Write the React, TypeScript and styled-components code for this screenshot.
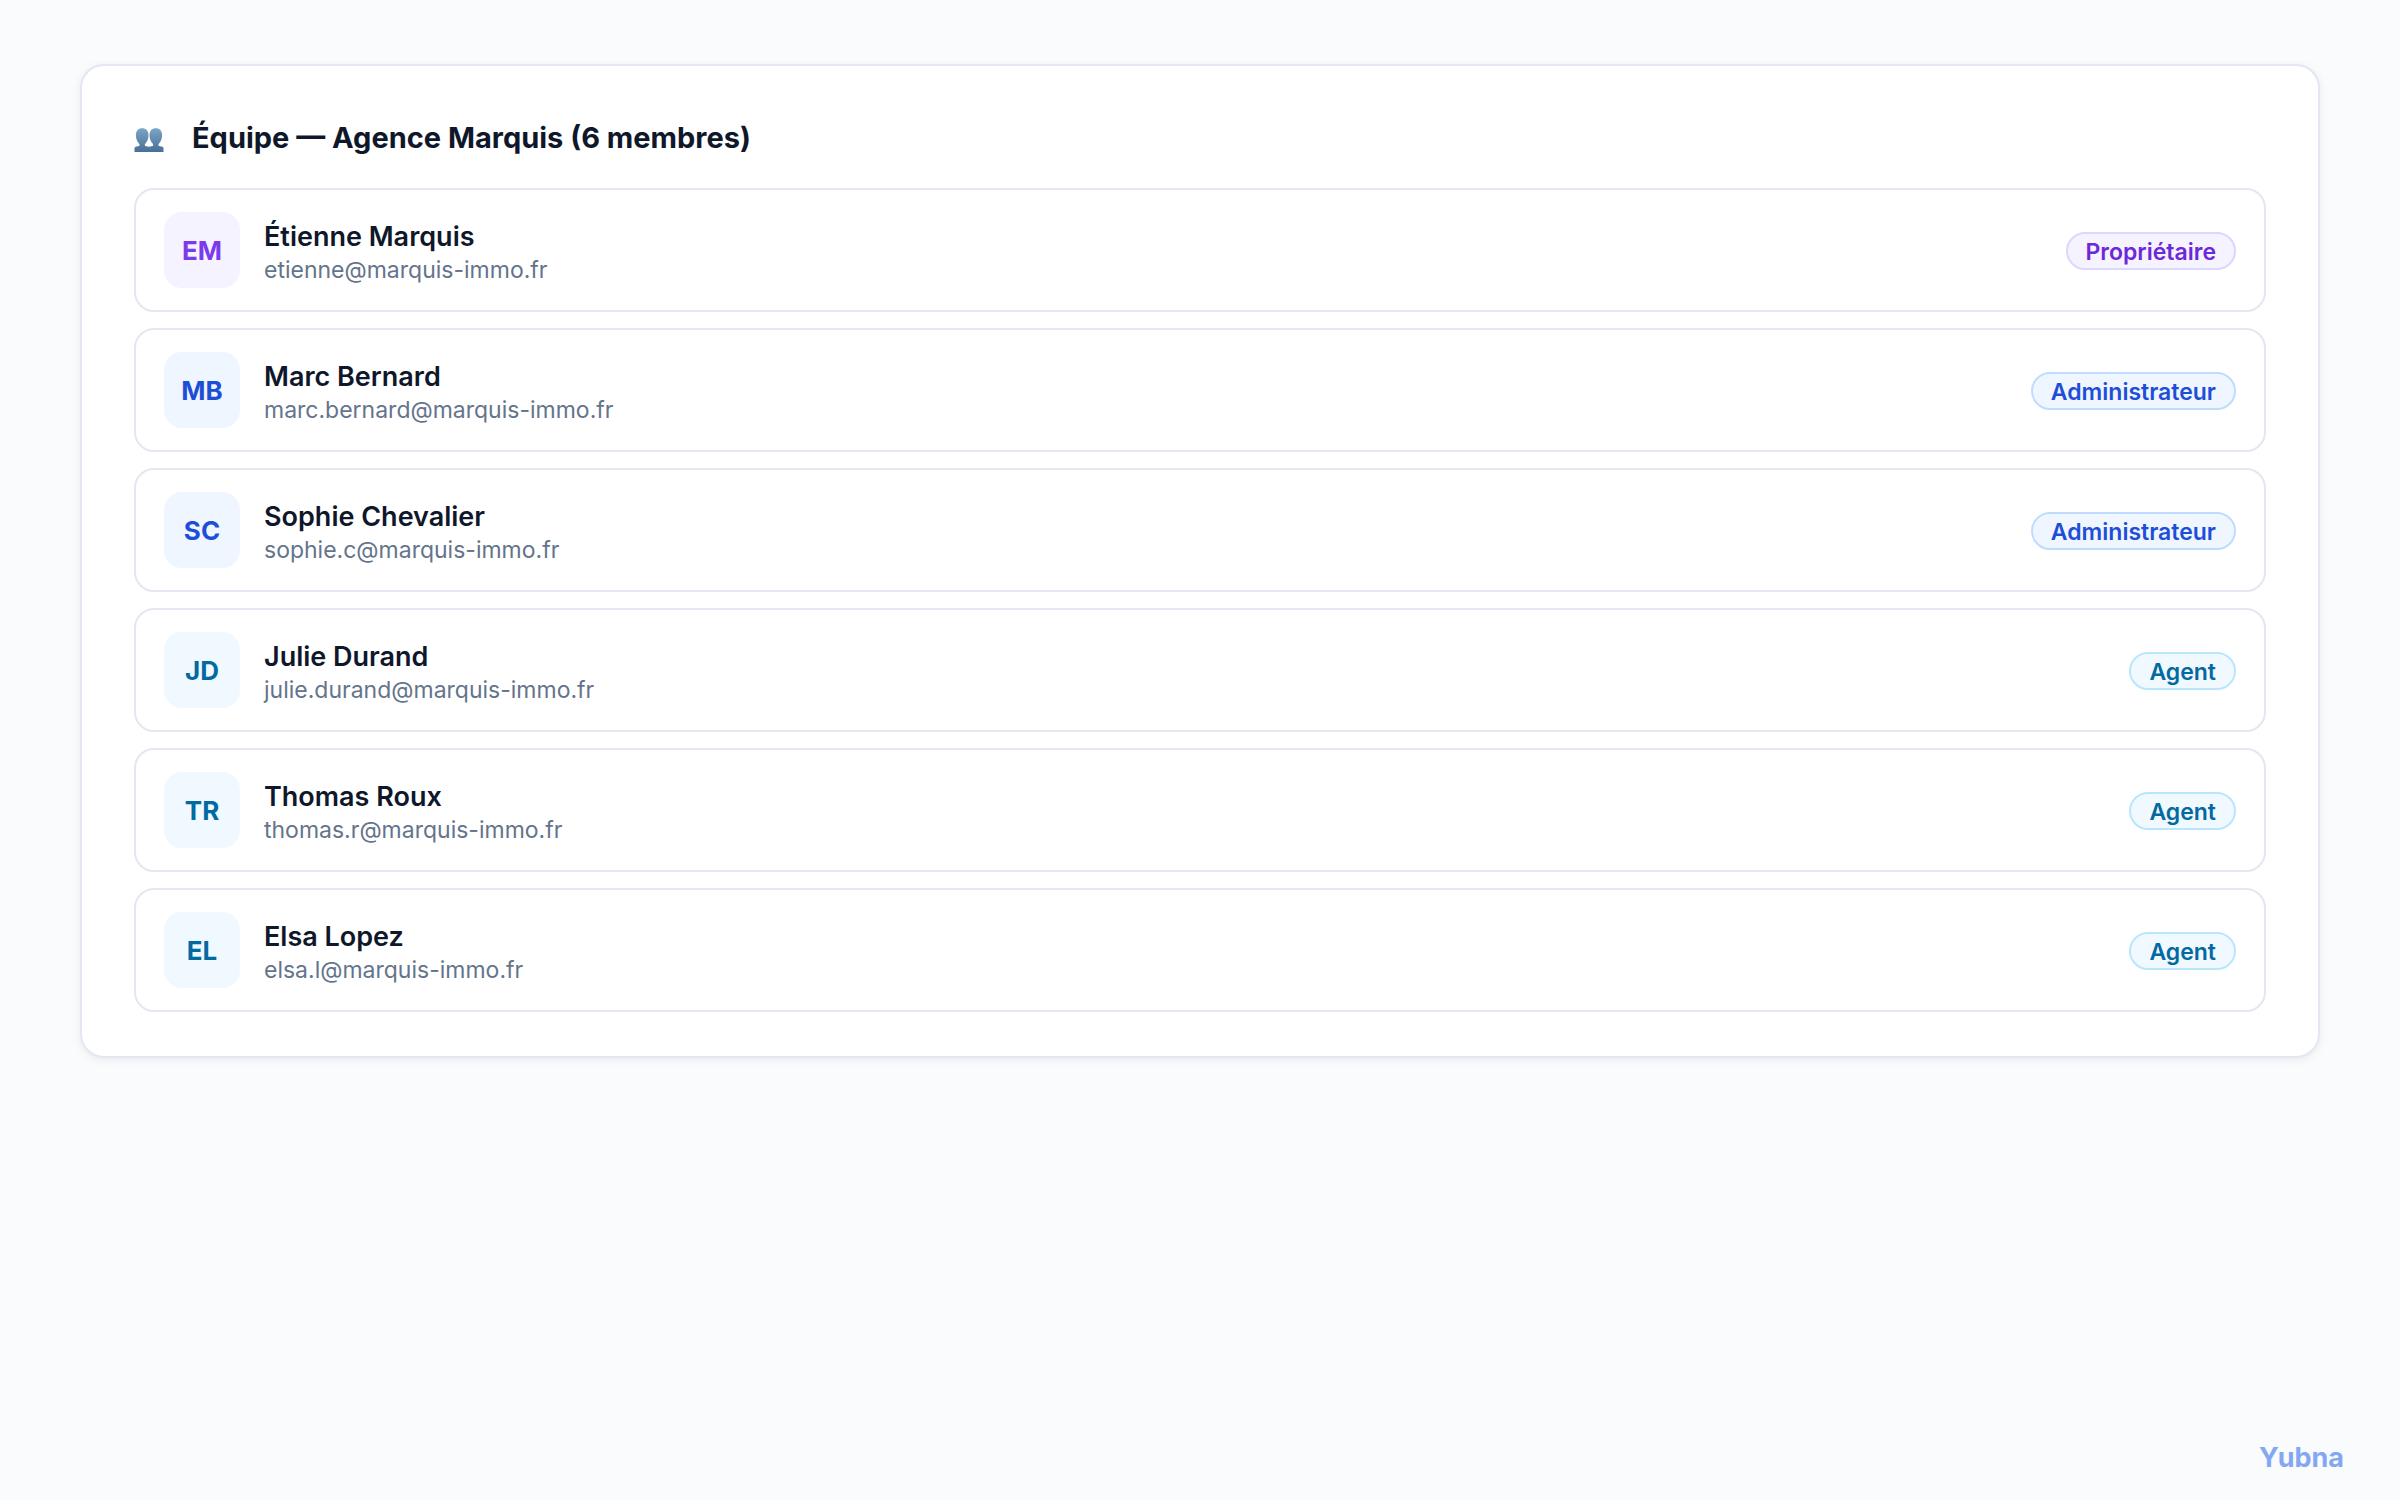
import React from "react";
import styled, { createGlobalStyle } from "styled-components";

const GlobalStyle = createGlobalStyle`
  * { box-sizing: border-box; }
  body {
    margin: 0;
    background: #f9fbfd;
    color: #0f172a;
    font-family: Inter, "Liberation Sans", sans-serif;
    -webkit-font-smoothing: antialiased;
  }
`;

const Page = styled.div`
  display: flex;
  flex-direction: column;
  min-height: 100vh;
  padding: 64px 80px 24px;
`;

const Card = styled.main`
  padding: 44px 52px;
  background: #ffffff;
  border: 2px solid #e4e7f0;
  border-radius: 24px;
  box-shadow: 0 2px 8px rgba(15, 23, 42, 0.07);
`;

const CardHeader = styled.header`
  display: flex;
  align-items: center;
  gap: 28px;
  height: 54px;
  margin-bottom: 24px;
  padding-top: 2px;
`;

const TeamIcon = styled.svg`
  flex: none;
  width: 30px;
  height: 24px;
  margin-top: 4px;
`;

const Title = styled.h1`
  margin: 0;
  font-size: 29px;
  line-height: 36px;
  font-weight: 700;
`;

const MemberList = styled.ul`
  display: flex;
  flex-direction: column;
  gap: 16px;
  margin: 0;
  padding: 0;
  list-style: none;
`;

const MemberRow = styled.li`
  display: flex;
  align-items: center;
  gap: 24px;
  padding: 22px 28px;
  border: 2px solid #e4e7f0;
  border-radius: 20px;
`;

type Tone = "violet" | "blue" | "sky";

const tones = {
  violet: { avatar: "#7c3aed", text: "#6d28d9", background: "#f5f3ff", border: "#ddd6fe" },
  blue: { avatar: "#1d4ed8", text: "#1d4ed8", background: "#eff6ff", border: "#bfdbfe" },
  sky: { avatar: "#0369a1", text: "#0369a1", background: "#f0f9ff", border: "#bae6fd" },
};

const Avatar = styled.div<{ $tone: Tone }>`
  display: grid;
  place-items: center;
  flex: none;
  width: 76px;
  height: 76px;
  border-radius: 18px;
  background: ${(p) => tones[p.$tone].background};
  color: ${(p) => tones[p.$tone].avatar};
  font-size: 26px;
  font-weight: 700;
`;

const Identity = styled.div`
  flex: 1;
  min-width: 0;
  padding-top: 6px;
`;

const Name = styled.div`
  font-size: 27px;
  line-height: 34px;
  font-weight: 600;
`;

const Email = styled.div`
  color: #64748b;
  font-size: 23px;
  line-height: 32px;
`;

const Role = styled.span<{ $tone: Tone }>`
  flex: none;
  margin-top: 2px;
  padding: 3px 18px 1px;
  border: 2px solid ${(p) => tones[p.$tone].border};
  border-radius: 20px;
  background: ${(p) => tones[p.$tone].background};
  color: ${(p) => tones[p.$tone].text};
  font-size: 23px;
  line-height: 30px;
  font-weight: 600;
`;

const Brand = styled.footer`
  align-self: flex-end;
  margin-top: auto;
  margin-right: -24px;
  color: #2563eb;
  opacity: 0.55;
  font-size: 27px;
  line-height: 36px;
  font-weight: 700;
`;

const members: { initials: string; name: string; email: string; role: string; tone: Tone }[] = [
  { initials: "EM", name: "Étienne Marquis", email: "etienne@marquis-immo.fr", role: "Propriétaire", tone: "violet" },
  { initials: "MB", name: "Marc Bernard", email: "marc.bernard@marquis-immo.fr", role: "Administrateur", tone: "blue" },
  { initials: "SC", name: "Sophie Chevalier", email: "sophie.c@marquis-immo.fr", role: "Administrateur", tone: "blue" },
  { initials: "JD", name: "Julie Durand", email: "julie.durand@marquis-immo.fr", role: "Agent", tone: "sky" },
  { initials: "TR", name: "Thomas Roux", email: "thomas.r@marquis-immo.fr", role: "Agent", tone: "sky" },
  { initials: "EL", name: "Elsa Lopez", email: "elsa.l@marquis-immo.fr", role: "Agent", tone: "sky" },
];

const bust =
  "M0.5 24V20.4C0.5 19.2 1.2 18.8 2.6 18.5L5 17.9C5.8 17.6 5.8 16.6 5 15.6C3.2 13.6 2 10.8 1.9 7.4C1.8 2.8 4.4 0.2 8.2 0.2S14.6 2.8 14.5 7.4C14.4 10.8 13.2 13.6 11.4 15.6C10.6 16.6 10.6 17.6 11.4 17.9L13.8 18.5C15.2 18.8 15.9 19.2 15.9 20.4V24Z";

export default function App() {
  return (
    <>
      <GlobalStyle />
      <Page>
        <Card>
          <CardHeader>
            <TeamIcon viewBox="0 0 30 24" aria-hidden="true">
              <defs>
                <linearGradient id="bust" gradientUnits="userSpaceOnUse" x1="0" y1="0" x2="0" y2="24">
                  <stop offset="0" stopColor="#7ba6c6" />
                  <stop offset="1" stopColor="#476f98" />
                </linearGradient>
              </defs>
              <path d={bust} fill="url(#bust)" />
              <path d={bust} fill="url(#bust)" transform="matrix(-1 0 0 1 30 0)" />
            </TeamIcon>
            <Title>Équipe — Agence Marquis (6 membres)</Title>
          </CardHeader>
          <MemberList>
            {members.map((m) => (
              <MemberRow key={m.email}>
                <Avatar $tone={m.tone}>{m.initials}</Avatar>
                <Identity>
                  <Name>{m.name}</Name>
                  <Email>{m.email}</Email>
                </Identity>
                <Role $tone={m.tone}>{m.role}</Role>
              </MemberRow>
            ))}
          </MemberList>
        </Card>
        <Brand>Yubna</Brand>
      </Page>
    </>
  );
}
